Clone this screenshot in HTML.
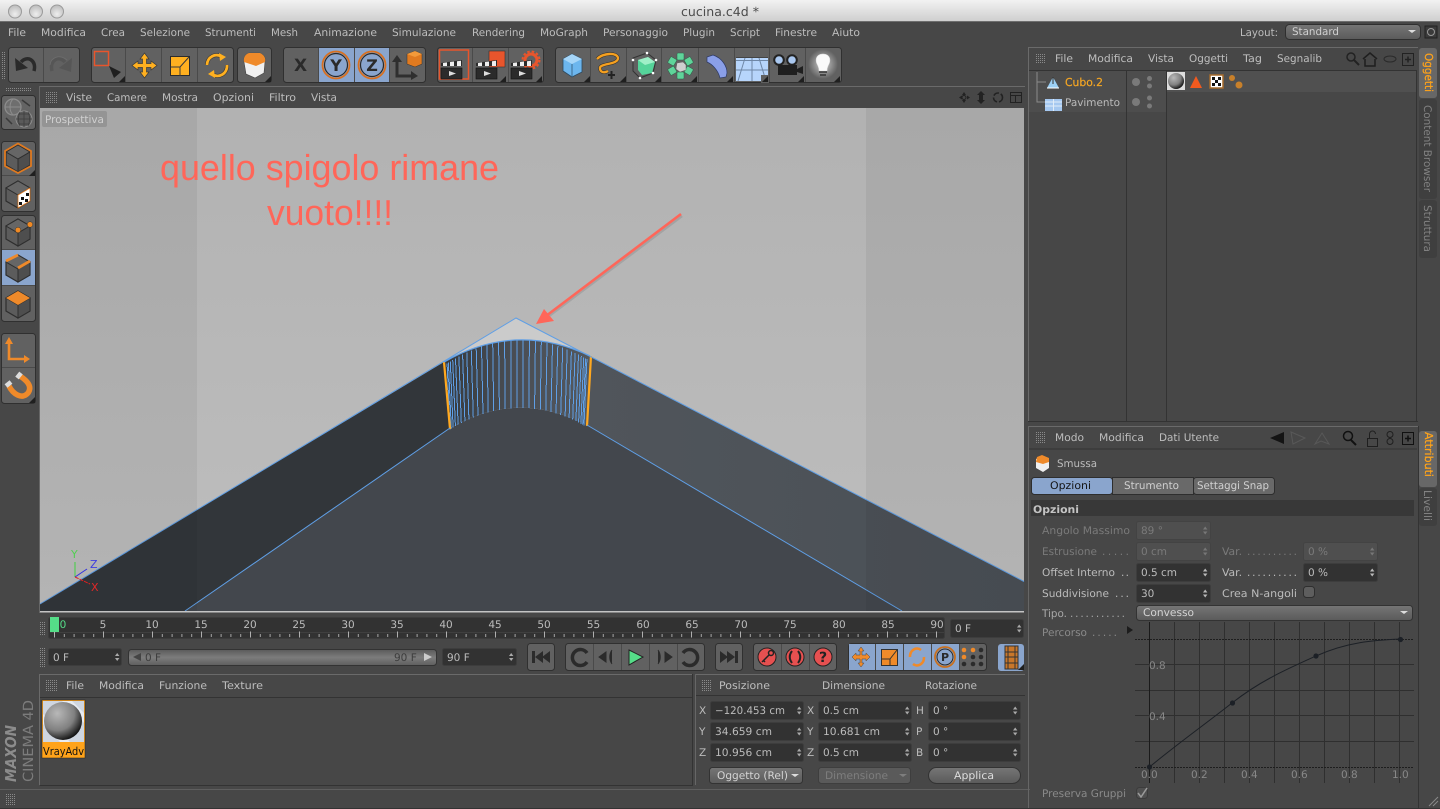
<!DOCTYPE html>
<html><head><meta charset="utf-8"><title>cucina.c4d</title>
<style>
html,body{margin:0;padding:0;background:#474747;overflow:hidden}
svg{display:block;text-rendering:geometricPrecision}
text{font-family:"DejaVu Sans","Liberation Sans",sans-serif;font-size:10.5px;fill:#bcbcbc}
.m{fill:#bebebe}.d{fill:#7a7a7a}
.p{fill:#616161;stroke:#303030;stroke-width:1}
.s{stroke:#4a4a4a;stroke-width:1}
.f{fill:#323232;stroke:#3d3d3d;stroke-width:1}
.fd{fill:#4f4f4f;stroke:#434343;stroke-width:1}
.b{fill:#8aa5cd}
</style></head><body>
<svg width="1440" height="809" viewBox="0 0 1440 809" xmlns="http://www.w3.org/2000/svg">
<defs>
<pattern id="g" width="2" height="2" patternUnits="userSpaceOnUse"><rect width="1" height="1" fill="#8a8a8a"/></pattern>
<linearGradient id="tb" x1="0" y1="0" x2="0" y2="1"><stop offset="0" stop-color="#f2f2f2"/><stop offset="1" stop-color="#cfcfcf"/></linearGradient>
<linearGradient id="cn" x1="0" y1="0" x2="0" y2="1"><stop offset="0" stop-color="#b2b2b2"/><stop offset="1" stop-color="#bebebe"/></linearGradient>
<linearGradient id="bev" x1="0" y1="0" x2="1" y2="0"><stop offset="0" stop-color="#363a3e"/><stop offset=".5" stop-color="#4a4e54"/><stop offset="1" stop-color="#53585e"/></linearGradient>
<linearGradient id="rf" x1="0" y1="0" x2="1" y2="0"><stop offset="0" stop-color="#50555b"/><stop offset="1" stop-color="#4a5056"/></linearGradient>
<linearGradient id="btn" x1="0" y1="0" x2="0" y2="1"><stop offset="0" stop-color="#767676"/><stop offset="1" stop-color="#5a5a5a"/></linearGradient>
<linearGradient id="sld" x1="0" y1="0" x2="0" y2="1"><stop offset="0" stop-color="#5a5a5a"/><stop offset=".5" stop-color="#7c7c7c"/><stop offset="1" stop-color="#5e5e5e"/></linearGradient>
<radialGradient id="sph" cx=".35" cy=".3" r=".75"><stop offset="0" stop-color="#b8b8b8"/><stop offset=".6" stop-color="#808080"/><stop offset="1" stop-color="#0c0c0c"/></radialGradient>
<radialGradient id="tl" cx=".5" cy=".7" r=".6"><stop offset="0" stop-color="#eee"/><stop offset="1" stop-color="#c2c2c2"/></radialGradient>
<radialGradient id="glow" cx=".5" cy=".5" r=".5"><stop offset="0" stop-color="#fff" stop-opacity=".7"/><stop offset="1" stop-color="#fff" stop-opacity="0"/></radialGradient>
<path id="sp" d="M0 3L2.2 0L4.4 3ZM0 5L2.2 8L4.4 5Z"/>
<path id="ct" d="M0 6H6V0Z" fill="#1f1f1f"/>
<g id="cube"><path d="M0-13L12-6V7L0 14L-12 7V-6Z" fill="#5c5c5c" stroke="#2e2e2e" stroke-width="1.200"/><path d="M0-13L12-6L0 1L-12-6Z" fill="#666" stroke="#2e2e2e" stroke-width="1"/><path d="M0 1V14L12 7V-6Z" fill="#4e4e4e" stroke="#2e2e2e" stroke-width="1"/></g>
<g id="clap"><rect x="0" y="10" width="21" height="11" fill="#2b2b2b" stroke="#111" stroke-width=".6"/><path d="M0 5L21 2V8H0Z" fill="#2b2b2b"/><path d="M2 5L6 4.400V8H2ZM9 4L13 3.500V8H9ZM16 3.200L20 2.700V8H16Z" fill="#eee"/><path d="M8 13L15 15.500L8 18Z" fill="#ddd"/></g>
</defs>

<!-- title bar -->
<rect width="1440" height="21" fill="url(#tb)"/><rect y="21" width="1440" height="1" fill="#6e6e6e"/>
<circle cx="15" cy="11.500" r="6.500" fill="url(#tl)" stroke="#9a9a9a"/><circle cx="36" cy="11.500" r="6.500" fill="url(#tl)" stroke="#9a9a9a"/><circle cx="57" cy="11.500" r="6.500" fill="url(#tl)" stroke="#9a9a9a"/>
<text x="681" y="16" style="font-size:12.500px;fill:#4c4c4c" textLength="78" lengthAdjust="spacingAndGlyphs">cucina.c4d *</text>

<!-- main menu -->
<text class="m" x="8" y="36" textLength="18" lengthAdjust="spacingAndGlyphs">File</text>
<text class="m" x="41" y="36" textLength="45" lengthAdjust="spacingAndGlyphs">Modifica</text>
<text class="m" x="101" y="36" textLength="24" lengthAdjust="spacingAndGlyphs">Crea</text>
<text class="m" x="140" y="36" textLength="50" lengthAdjust="spacingAndGlyphs">Selezione</text>
<text class="m" x="205" y="36" textLength="51" lengthAdjust="spacingAndGlyphs">Strumenti</text>
<text class="m" x="271" y="36" textLength="27" lengthAdjust="spacingAndGlyphs">Mesh</text>
<text class="m" x="314" y="36" textLength="63" lengthAdjust="spacingAndGlyphs">Animazione</text>
<text class="m" x="392" y="36" textLength="64" lengthAdjust="spacingAndGlyphs">Simulazione</text>
<text class="m" x="472" y="36" textLength="53" lengthAdjust="spacingAndGlyphs">Rendering</text>
<text class="m" x="540" y="36" textLength="48" lengthAdjust="spacingAndGlyphs">MoGraph</text>
<text class="m" x="603" y="36" textLength="65" lengthAdjust="spacingAndGlyphs">Personaggio</text>
<text class="m" x="683" y="36" textLength="32" lengthAdjust="spacingAndGlyphs">Plugin</text>
<text class="m" x="730" y="36" textLength="30" lengthAdjust="spacingAndGlyphs">Script</text>
<text class="m" x="775" y="36" textLength="42" lengthAdjust="spacingAndGlyphs">Finestre</text>
<text class="m" x="832" y="36" textLength="28" lengthAdjust="spacingAndGlyphs">Aiuto</text>
<text class="m" x="1240" y="36" textLength="38" lengthAdjust="spacingAndGlyphs">Layout:</text>
<rect x="1285.500" y="24.500" width="135" height="15" rx="4" fill="url(#btn)" stroke="#2f2f2f"/>
<text x="1292" y="35" style="fill:#d0d0d0" textLength="47" lengthAdjust="spacingAndGlyphs">Standard</text>
<path d="M1408 30H1416L1412 33Z" fill="#ddd"/>
<rect x="1425" y="26" width="12" height="12" fill="#3a3a3a" stroke="#222"/><circle cx="1431" cy="32" r="3.500" fill="none" stroke="#999"/>

<!-- top toolbar -->
<rect x="1" y="52" width="5" height="27" fill="url(#g)"/>
<rect class="p" x="8.500" y="47.500" width="71" height="35" rx="3"/><path class="s" d="M43.500 48V82"/>
<path d="M34 71C37 60 27 55 21 62" fill="none" stroke="#2a2a2a" stroke-width="3.500"/><path d="M15 58L16 71L28 68Z" fill="#2a2a2a"/>
<g opacity=".6"><path d="M52 71C49 60 59 55 65 62" fill="none" stroke="#4f4f4f" stroke-width="3.500"/><path d="M72 58L71 72L59 68Z" fill="#4f4f4f"/><path d="M50 65C51 57 60 54 67 60" fill="none" stroke="#777" stroke-width=".7"/></g>
<rect class="p" x="91.500" y="47.500" width="142" height="35" rx="3"/><path class="s" d="M125.500 48V82M161.500 48V82M197.500 48V82"/>
<rect x="94.500" y="51.500" width="14" height="14" fill="none" stroke="#e8552c" stroke-width="1.500"/>
<path d="M109 66L121 72L114 78Z" fill="#1f1f1f"/><use href="#ct" x="119" y="76"/>
<path d="M144.500 53L149 59H146.500V63.500H151V61L157 65.500L151 70V67.500H146.500V72H149L144.500 78L140 72H142.500V67.500H138V70L132 65.500L138 61V63.500H142.500V59H140Z" fill="#ffb020" stroke="#3a3a3a" stroke-width=".7"/>
<rect x="170.500" y="56.500" width="19" height="19" fill="#ffb020" stroke="#2c2c2c"/><path d="M171 67H180V76M180 67L189 57" fill="none" stroke="#3a3a3a"/>
<path d="M207 65A9.500 10 0 0 1 222 57" fill="none" stroke="#3a3a3a" stroke-width="4"/><path d="M227 65A9.500 10 0 0 1 212 74" fill="none" stroke="#3a3a3a" stroke-width="4"/>
<path d="M207 65A9.500 10 0 0 1 222 57" fill="none" stroke="#ffb020" stroke-width="2.800"/><path d="M227 65A9.500 10 0 0 1 212 74" fill="none" stroke="#ffb020" stroke-width="2.800"/><path d="M219 53L226 57L220 61ZM215 78L208 74L214 70Z" fill="#ffb020"/>
<rect class="p" x="237.500" y="47.500" width="34" height="35" rx="3"/>
<path d="M244 62C243 57 246 54 249 53L260 53C264 55 266 58 265 62L264 73L255 78L246 74Z" fill="#f0f0f0" stroke="#444" stroke-width=".6"/><path d="M244 62C243 57 246 54 249 53L260 53C264 55 266 58 265 62L256 66Z" fill="#ef8a2a"/><use href="#ct" x="265" y="76"/>
<rect class="p" x="283.500" y="47.500" width="142" height="35" rx="3"/>
<rect class="b" x="318" y="48" width="71" height="34"/><path class="s" d="M318.500 48V82M354.500 48V82M389.500 48V82"/>
<text x="300.500" y="71" text-anchor="middle" style="font-size:17px;font-weight:bold;fill:#2a2a2a">X</text>
<circle cx="336" cy="65" r="13.500" fill="none" stroke="#d9701f" stroke-width="1.800"/><circle cx="336" cy="65" r="11.500" fill="none" stroke="#2a2a2a" stroke-width="1.200"/>
<text x="336" y="71" text-anchor="middle" style="font-size:16px;font-weight:bold;fill:#2a2a2a">Y</text>
<circle cx="372" cy="65" r="13.500" fill="none" stroke="#d9701f" stroke-width="1.800"/><circle cx="372" cy="65" r="11.500" fill="none" stroke="#2a2a2a" stroke-width="1.200"/>
<text x="372" y="71" text-anchor="middle" style="font-size:16px;font-weight:bold;fill:#2a2a2a">Z</text>
<path d="M397 60V76H413" fill="none" stroke="#2f2f2f" stroke-width="3"/><path d="M392 62L397 55L402 62ZM411 71L418 76L411 80Z" fill="#2f2f2f"/>
<path d="M415 51L422 54V64L415 67L407 64V54Z" fill="#e07a20" stroke="#333" stroke-width=".5"/><path d="M407 54L415 57L422 54L415 51Z" fill="#f39a3a"/>
<rect class="p" x="437.500" y="47.500" width="106" height="35" rx="3"/><path class="s" d="M472.500 48V82M508.500 48V82"/>
<rect x="439.500" y="50" width="29" height="29" fill="none" stroke="#e8552c" stroke-width="1.500"/>
<use href="#clap" x="441" y="58"/>
<rect x="489" y="51" width="16" height="16" fill="#e8552c" stroke="#333" stroke-width=".6"/><use href="#clap" x="476" y="58"/><use href="#ct" x="500" y="76"/>
<circle cx="531" cy="60" r="6" fill="none" stroke="#e8552c" stroke-width="3"/><circle cx="531" cy="60" r="8.500" fill="none" stroke="#e8552c" stroke-width="2" stroke-dasharray="2.500 2"/><use href="#clap" x="511" y="58"/><use href="#ct" x="536" y="76"/>
<rect class="p" x="555.500" y="47.500" width="286" height="35" rx="3"/><path class="s" d="M590.500 48V82M626.500 48V82M661.500 48V82M698.500 48V82M734.500 48V82M769.500 48V82M805.500 48V82"/>
<path d="M572 54L582 59V72L572 77L563 71V59Z" fill="#6cb6ee" stroke="#2e4a60" stroke-width=".8"/><path d="M563 59L572 64L582 59L572 54Z" fill="#a5d5f8"/><path d="M572 64V77" stroke="#3e6a8c"/><use href="#ct" x="584" y="76"/>
<path d="M597 59C603 53 617 52 618 58C618 65 600 63 600 68C600 73 605 73 608 71" fill="none" stroke="#2a2a2a" stroke-width="3.400"/><path d="M597 59C603 53 617 52 618 58C618 65 600 63 600 68C600 73 605 73 608 71" fill="none" stroke="#f5a020" stroke-width="2.400"/><path d="M608 75H615M611.500 71V79" stroke="#222" stroke-width="2"/><use href="#ct" x="620" y="76"/>
<path d="M633 58L647 53L656 60L653 73L640 78L633 71Z" fill="none" stroke="#333"/><path d="M638 60L648 57L655 62L652 73L642 75L638 70Z" fill="#55d49a"/><path d="M638 60L648 57L655 62L645 65Z" fill="#9ff0c8"/><circle cx="633" cy="60" r="1.300" fill="#fff"/><circle cx="647" cy="53" r="1.300" fill="#fff"/><circle cx="656" cy="60" r="1.300" fill="#fff"/><circle cx="653" cy="73" r="1.300" fill="#fff"/><circle cx="640" cy="78" r="1.300" fill="#fff"/><use href="#ct" x="655" y="76"/>
<g fill="#5fd49a" stroke="#2d5f46" stroke-width=".5"><rect x="-3.500" y="-13" width="7" height="7" rx="1" transform="translate(680.500,66)"/><rect x="-3.500" y="-13" width="7" height="7" rx="1" transform="translate(680.500,66) rotate(60)"/><rect x="-3.500" y="-13" width="7" height="7" rx="1" transform="translate(680.500,66) rotate(120)"/><rect x="-3.500" y="-13" width="7" height="7" rx="1" transform="translate(680.500,66) rotate(180)"/><rect x="-3.500" y="-13" width="7" height="7" rx="1" transform="translate(680.500,66) rotate(240)"/><rect x="-3.500" y="-13" width="7" height="7" rx="1" transform="translate(680.500,66) rotate(300)"/></g><path d="M677 63L683 62L686 65V70L680 72L676 69Z" fill="#cfcfcf" stroke="#666" stroke-width=".5"/><use href="#ct" x="691" y="76"/>
<path d="M707 57L713 55C722 58 727 66 727 73L726 77L720 78C718 70 712 64 707 62Z" fill="#8a9fe8" stroke="#2e3a66" stroke-width=".7"/><use href="#ct" x="727" y="76"/>
<rect x="736" y="57" width="32" height="24" fill="#b7d5fb"/><path d="M736 57.500H768" stroke="#444"/><path d="M736 60.500H768M752 58V81M745 58L738 81M759 58L766 81M736 70H768" stroke="#6f87a6" stroke-width="1" fill="none"/><rect x="761" y="75" width="8" height="8" fill="#5f5f5f"/><use href="#ct" x="762" y="76"/>
<circle cx="779" cy="60" r="4.800" fill="#aac8f0" stroke="#222" stroke-width="2"/><circle cx="792" cy="60" r="4.800" fill="#aac8f0" stroke="#222" stroke-width="2"/><rect x="778" y="65" width="19" height="10" fill="#1f1f1f"/><path d="M797 69L803 66V74L797 72Z" fill="#1f1f1f"/><use href="#ct" x="798" y="76"/>
<circle cx="823" cy="64" r="15" fill="url(#glow)"/><path d="M823 54C830 54 831 60 829 64C828 66 827 68 827 71H819C819 68 818 66 817 64C815 60 816 54 823 54Z" fill="#fafafa" stroke="#ddd" stroke-width=".5"/><path d="M819 72H827M820 75H826" stroke="#333" stroke-width="1.500"/><use href="#ct" x="834" y="76"/>

<!-- left tool column -->
<rect x="6" y="87" width="26" height="5" fill="url(#g)"/>
<rect x="1.500" y="95.500" width="34" height="34" rx="3" fill="#646464" stroke="#2e2e2e"/>
<circle cx="13" cy="107" r="8" fill="#6e6e6e" stroke="#8c8c8c" stroke-width="1.300"/><path d="M5 107H21M13 99C9 103 9 111 13 115" stroke="#8c8c8c" fill="none"/>
<circle cx="24" cy="119" r="8" fill="#5a5a5a" stroke="#8c8c8c" stroke-width="1"/><path d="M16 119H32M24 111V127M18 114H30M18 124H30M20 112C18 116 18 122 20 126M28 112C30 116 30 122 28 126" stroke="#3e3e3e" stroke-width=".8" fill="none"/><path d="M22 100L30 106M6 118L12 124" stroke="#3a3a3a" stroke-width="1.500"/>
<rect class="p" x="1.500" y="141.500" width="34" height="70" rx="3"/><path class="s" d="M2 175.500H35"/>
<rect class="p" x="1.500" y="215.500" width="34" height="106" rx="3"/><rect class="b" x="2" y="250" width="33" height="35"/><path class="s" d="M2 249.500H35M2 285.500H35"/>
<rect class="p" x="1.500" y="333.500" width="34" height="70" rx="3"/><path class="s" d="M2 367.500H35"/>
<use href="#cube" x="18" y="158"/><path d="M18 143.500L31 151V166L18 173L5 166V151Z" fill="none" stroke="#e07a20" stroke-width="1.800"/><use href="#ct" x="29" y="170"/>
<use href="#cube" x="18" y="194"/><path d="M18 195V208L30 201V188Z" fill="#fff" stroke="#e07a20" stroke-width=".8"/><path d="M21 197h3v3h-3zM26 193h3v3h-3zM19 202h3v3h-3zM25 199h3v3h-3z" fill="#111"/>
<use href="#cube" x="18" y="232"/><circle cx="18" cy="230" r="2.800" fill="#f08a24" stroke="#333" stroke-width=".5"/><circle cx="30" cy="224.500" r="2.800" fill="#f08a24" stroke="#333" stroke-width=".5"/>
<use href="#cube" x="18" y="268"/><path d="M6 261L18 255M18 268L30 261" stroke="#ef8a2a" stroke-width="2.800"/>
<use href="#cube" x="18" y="304"/><path d="M18 291L30 298L18 305L6 298Z" fill="#ef8a2a"/>
<path d="M9 340V359H27" fill="none" stroke="#ef8a2a" stroke-width="2.600"/><path d="M5 344L9 337L13 344ZM24 355L30 359L24 363Z" fill="#ef8a2a"/>
<path d="M9 386C13 394 22 400 28 393C33 386 26 380 20 376" fill="none" stroke="#ef8a2a" stroke-width="5.500"/><path d="M6 386L11 382M17 378L21 373" stroke="#ddd" stroke-width="4.500"/><use href="#ct" x="29" y="397"/>

<!-- viewport frame -->
<rect x="39" y="86" width="986" height="1" fill="#6a6a6a"/><rect x="39" y="86" width="1" height="527" fill="#666"/>
<rect x="46" y="92" width="11" height="11" fill="url(#g)"/>
<text class="m" x="66" y="101" textLength="26" lengthAdjust="spacingAndGlyphs">Viste</text>
<text class="m" x="107" y="101" textLength="40" lengthAdjust="spacingAndGlyphs">Camere</text>
<text class="m" x="162" y="101" textLength="36" lengthAdjust="spacingAndGlyphs">Mostra</text>
<text class="m" x="213" y="101" textLength="41" lengthAdjust="spacingAndGlyphs">Opzioni</text>
<text class="m" x="269" y="101" textLength="27" lengthAdjust="spacingAndGlyphs">Filtro</text>
<text class="m" x="311" y="101" textLength="26" lengthAdjust="spacingAndGlyphs">Vista</text>
<path d="M964 92L966 95H962ZM964 103L966 100H962ZM959 97.500L962 95.500V99.500ZM970 97.500L967 95.500V99.500Z" fill="#222"/><circle cx="964" cy="97.500" r="2" fill="none" stroke="#222"/>
<path d="M981 91L985 95H983V100H985L981 104L977 100H979V95H977Z" fill="#222"/>
<circle cx="998" cy="97.500" r="4.500" fill="none" stroke="#222" stroke-width="1.600" stroke-dasharray="6 2"/>
<rect x="1010.500" y="92.500" width="11" height="10" fill="none" stroke="#222"/><path d="M1011 95.500H1021M1015.500 96V102" stroke="#222"/>

<!-- viewport -->
<rect x="40" y="108" width="984" height="504" fill="url(#cn)"/>
<path d="M516 318L444 362Q516 321 590 356Z" fill="#cbcbcb"/>
<path d="M40 604L444 362L450 428L185 611H40Z" fill="#32363a"/>
<path d="M590 356L1024 581.500V611H902L587 425Z" fill="url(#rf)"/>
<path d="M185 611L450 428Q517 389 587 425L902 611Z" fill="#43474d"/>
<path d="M444 362Q516 321 590 356L587 425Q517 389 450 428Z" fill="url(#bev)"/>
<g transform="matrix(1,-0.03,0,1,0,15.500)" stroke="#5f9fe6" stroke-width="1" fill="none" shape-rendering="crispEdges">
<path d="M517 340V408M523.200 340.200L522.900 408.200M510.800 340.200L511.100 408.200M529.400 340.700L528.800 408.600M504.600 340.700L505.200 408.600M535.400 341.500L534.600 409.300M498.600 341.500L499.400 409.300M541.300 342.600L540.300 410.300M492.700 342.600L493.700 410.300M547 343.900L545.800 411.600M487 343.900L488.200 411.600M552.500 345.500L551 413M481.500 345.500L483 413M557.800 347.200L556 414.600M476.200 347.200L478 414.600M562.700 349.100L560.700 416.300M471.300 349.100L473.300 416.300M567.200 351L565.100 418M466.800 351L468.900 418M571.400 352.900L569.100 419.700M462.600 352.900L464.900 419.700M575.100 354.800L572.700 421.400M458.900 354.800L461.300 421.400M578.500 356.500L575.900 423M455.500 356.500L458.100 423M581.300 358.100L578.600 424.400M452.700 358.100L455.400 424.400M583.700 359.400L580.900 425.700M450.300 359.400L453.100 425.700M585.600 360.500L582.700 426.700M448.400 360.500L451.300 426.700M586.900 361.300L584 427.400M447.100 361.300L450 427.400"/>
</g>
<path d="M444 362L450 429M591 356L587 426" stroke="#ffa81f" stroke-width="2.200" fill="none"/>
<path d="M444 362Q516 321 590 356" stroke="#5f9fe6" stroke-width="1.300" fill="none"/>
<path d="M40 604L516 318L1024 581.500M185 611L450 428M587 425L902 611" stroke="#5f9fe6" stroke-width="1" fill="none"/>
<rect x="40" y="108" width="157" height="504" fill="#000" opacity=".05"/><rect x="866" y="108" width="158" height="504" fill="#000" opacity=".05"/>
<rect x="42" y="111" width="65" height="16" rx="2" fill="#8f8f8f" opacity=".8"/>
<text x="45" y="123" style="fill:#d0d0d0" textLength="59" lengthAdjust="spacingAndGlyphs">Prospettiva</text>
<text x="160" y="180" style='font-family:"Liberation Sans",sans-serif;font-size:36px;fill:#ff6659' textLength="339" lengthAdjust="spacingAndGlyphs">quello spigolo rimane</text>
<text x="267" y="225" style='font-family:"Liberation Sans",sans-serif;font-size:36px;fill:#ff6659' textLength="126" lengthAdjust="spacingAndGlyphs">vuoto!!!!</text>
<path d="M681 214L548 314" stroke="#5f5f5f" stroke-width="2.600" opacity=".2" transform="translate(1,2)"/>
<path d="M681 214L546 316" stroke="#ff6659" stroke-width="2.600"/><path d="M536 324L544 309L554 321Z" fill="#ff6659"/>
<path d="M75 577V562" stroke="#40d040"/><path d="M75 577L87 569" stroke="#3030e0"/><path d="M75 577L90 584" stroke="#e02020" stroke-dasharray="4 1"/>
<text x="71" y="558" style="font-size:11px;fill:#50d050">Y</text><text x="90" y="568" style="font-size:11px;fill:#4040e0">Z</text><text x="91" y="591" style="font-size:11px;fill:#e02828">X</text>
<rect x="40" y="611" width="984" height="1.500" fill="#c4c4c4"/>

<!-- timeline -->
<rect x="40" y="622" width="5" height="14" fill="url(#g)"/>
<rect x="48.500" y="617.500" width="896" height="21" rx="2" fill="#323232" stroke="#3c3c3c"/>
<path d="M50 632.500H944" stroke="#3f3f3f"/>
<line x1="54" x2="940" y1="635.500" y2="635.500" stroke="#a6a6a6" stroke-width="3" stroke-dasharray="1 8.800"/>
<line x1="54" x2="940" y1="634.500" y2="634.500" stroke="#b0b0b0" stroke-width="6" stroke-dasharray="1 48"/>
<rect x="50" y="617" width="9" height="15" fill="#55dd88"/>
<g text-anchor="middle">
<text x="63" y="628" style="fill:#55dd88">0</text><text x="103" y="628">5</text><text x="152" y="628">10</text><text x="201" y="628">15</text><text x="250" y="628">20</text><text x="299" y="628">25</text><text x="348" y="628">30</text><text x="397" y="628">35</text><text x="446" y="628">40</text><text x="495" y="628">45</text><text x="544" y="628">50</text><text x="593.500" y="628">55</text><text x="643" y="628">60</text><text x="692" y="628">65</text><text x="741" y="628">70</text><text x="790" y="628">75</text><text x="839" y="628">80</text><text x="888" y="628">85</text><text x="937" y="628">90</text>
</g>
<rect class="f" x="950.500" y="619.500" width="73" height="18" rx="2"/><text x="955" y="632">0 F</text><use href="#sp" x="1017" y="624.500" fill="#aaa"/>

<!-- transport row -->
<rect x="40" y="648" width="5" height="19" fill="url(#g)"/>
<rect class="f" x="48.500" y="648.500" width="73" height="17" rx="2"/><text x="53" y="661">0 F</text><use href="#sp" x="115" y="653" fill="#aaa"/>
<rect x="128.500" y="649.500" width="308" height="16" rx="3" fill="url(#sld)" stroke="#333"/>
<path d="M133 657L141 653V661Z" fill="#444"/><text x="145" y="661" style="fill:#3d3d3d">0 F</text><text x="394" y="661" style="fill:#3d3d3d">90 F</text><path d="M432 657L424 653V661Z" fill="#ccc"/>
<rect class="f" x="442.500" y="648.500" width="74" height="17" rx="2"/><text x="447" y="661">90 F</text><use href="#sp" x="509" y="653" fill="#aaa"/>
<rect class="p" x="527.500" y="643.500" width="27" height="27" rx="3"/>
<path d="M532 651V663H535V651ZM535 657L543 651V663ZM542 657L550 651V663Z" fill="#2b2b2b"/>
<rect class="p" x="565.500" y="643.500" width="139" height="27" rx="3"/><path class="s" d="M593.500 644V670M621.500 644V670M649.500 644V670M677.500 644V670"/>
<path d="M587 653A8 8 0 1 0 587 662" fill="none" stroke="#2b2b2b" stroke-width="3.500"/>
<path d="M599 657L606 652V662ZM612 650C609 654 609 660 612 664" fill="#2b2b2b" stroke="#2b2b2b"/>
<path d="M629 650L643 657L629 665Z" fill="#55dd88" stroke="#222"/>
<path d="M672 657L665 652V662ZM658 650C661 654 661 660 658 664" fill="#2b2b2b" stroke="#2b2b2b"/>
<path d="M683 653A8 8 0 1 1 683 662" fill="none" stroke="#2b2b2b" stroke-width="3.500"/>
<rect class="p" x="715.500" y="643.500" width="27" height="27" rx="3"/>
<path d="M738 651V663H735V651ZM735 657L727 651V663ZM728 657L720 651V663Z" fill="#2b2b2b"/>
<rect class="p" x="753.500" y="643.500" width="83" height="27" rx="3"/><path class="s" d="M781.500 644V670M809.500 644V670"/>
<circle cx="767" cy="657" r="9" fill="#e65050" stroke="#222"/><circle cx="771" cy="653" r="2.500" fill="none" stroke="#222" stroke-width="1.500"/><path d="M769 655L762 662M763 660L765 662" stroke="#222" stroke-width="1.500"/>
<circle cx="795" cy="657" r="9" fill="#e65050" stroke="#222"/><path d="M792 651C789 655 789 659 792 663M798 651C801 655 801 659 798 663" fill="none" stroke="#222" stroke-width="2"/>
<circle cx="823" cy="657" r="9" fill="#e65050" stroke="#222"/><text x="823" y="662" text-anchor="middle" style="font-size:14px;font-weight:bold;fill:#222">?</text>
<rect class="p" x="848.500" y="643.500" width="138" height="27" rx="3"/><rect class="b" x="849" y="644" width="110" height="26"/><path class="s" d="M875.500 644V670M903.500 644V670M931.500 644V670M959.500 644V670"/>
<path d="M861 647L864 651H862V655H866V653L870 657L866 661V659H862V663H864L861 667L858 663H860V659H856V661L852 657L856 653V655H860V651H858Z" fill="#ef8a2a" stroke="#444" stroke-width=".5"/>
<rect x="881.500" y="649.500" width="16" height="16" fill="#ef8a2a" stroke="#333"/><path d="M882 659H890V666M890 659L897 650" fill="none" stroke="#333"/>
<path d="M910 657A7 8 0 0 1 921 650" fill="none" stroke="#ef8a2a" stroke-width="2.600"/><path d="M924 657A7 8 0 0 1 913 664" fill="none" stroke="#ef8a2a" stroke-width="2.600"/>
<circle cx="945" cy="657" r="10" fill="none" stroke="#c8701f" stroke-width="1.800"/><circle cx="945" cy="657" r="8" fill="none" stroke="#2a2a2a"/><text x="945" y="661" text-anchor="middle" style="font-size:11px;font-weight:bold;fill:#2a2a2a">P</text>
<g fill="#2b2b2b"><circle cx="964" cy="650" r="2.300" fill="#ef8a2a"/><circle cx="973" cy="650" r="2.300" fill="#ef8a2a"/><circle cx="981" cy="650" r="2.300"/><circle cx="964" cy="657" r="2.300" fill="#ef8a2a"/><circle cx="973" cy="657" r="2.300"/><circle cx="981" cy="657" r="2.300"/><circle cx="964" cy="664" r="2.300"/><circle cx="973" cy="664" r="2.300"/><circle cx="981" cy="664" r="2.300"/></g>
<rect class="b" x="998" y="644" width="26" height="27" rx="3"/>
<rect x="1005" y="646" width="13" height="23" fill="#c9772a" stroke="#333"/><path d="M1005 652H1018M1005 657H1018M1005 663H1018M1008 646V669M1015 646V669" stroke="#333"/><use href="#ct" x="1018" y="664"/>

<!-- material panel -->
<rect x="39" y="674" width="653" height="1" fill="#6a6a6a"/><rect x="39" y="674" width="1" height="111" fill="#6a6a6a"/><rect x="692" y="674" width="1" height="111" fill="#333"/>
<rect x="46" y="680" width="11" height="11" fill="url(#g)"/>
<text class="m" x="66" y="689" textLength="18" lengthAdjust="spacingAndGlyphs">File</text>
<text class="m" x="99" y="689" textLength="45" lengthAdjust="spacingAndGlyphs">Modifica</text>
<text class="m" x="159" y="689" textLength="48" lengthAdjust="spacingAndGlyphs">Funzione</text>
<text class="m" x="222" y="689" textLength="41" lengthAdjust="spacingAndGlyphs">Texture</text>
<rect x="40" y="697" width="653" height="1" fill="#333"/>
<rect x="40" y="785" width="653" height="1" fill="#333"/><rect x="0" y="789" width="1030" height="1" fill="#5f5f5f"/>
<rect x="42" y="700" width="43" height="58" fill="#ffa31a" stroke="#222" stroke-width=".5"/><rect x="43" y="701" width="41" height="41" fill="#cfd6e0"/><path d="M43 724L60 742H70L43 714ZM62 701L84 723V713L72 701Z" fill="#e8ecf2"/><circle cx="63" cy="721" r="19" fill="url(#sph)"/>
<text x="43" y="755" style="fill:#111;font-size:11px" textLength="41" lengthAdjust="spacingAndGlyphs">VrayAdv</text>
<text transform="translate(16,782) rotate(-90)" style="font-size:15px;font-weight:bold;font-style:italic;fill:#8c8c8c" textLength="57" lengthAdjust="spacingAndGlyphs">MAXON</text>
<text transform="translate(33,782) rotate(-90)" style="font-size:14px;fill:#7c7c7c" textLength="82" lengthAdjust="spacingAndGlyphs">CINEMA 4D</text>
<rect x="5" y="794" width="11" height="11" fill="url(#g)"/>
<rect x="0" y="808" width="1440" height="1" fill="#333"/>

<!-- coordinates panel -->
<rect x="695" y="674" width="330" height="1" fill="#6a6a6a"/><rect x="695" y="674" width="1" height="111" fill="#666"/><rect x="696" y="695" width="329" height="1" fill="#333"/>
<rect x="701" y="680" width="11" height="11" fill="url(#g)"/>
<text class="m" x="719" y="689" textLength="51" lengthAdjust="spacingAndGlyphs">Posizione</text>
<text class="m" x="822" y="689" textLength="63" lengthAdjust="spacingAndGlyphs">Dimensione</text>
<text class="m" x="925" y="689" textLength="52" lengthAdjust="spacingAndGlyphs">Rotazione</text>
<text x="699" y="714">X</text><text x="699" y="735">Y</text><text x="699" y="756">Z</text>
<text x="807" y="714">X</text><text x="807" y="735">Y</text><text x="807" y="756">Z</text>
<text x="916" y="714">H</text><text x="916" y="735">P</text><text x="916" y="756">B</text>
<rect class="f" x="710.500" y="701.500" width="93" height="18" rx="2"/><rect class="f" x="818.500" y="701.500" width="93" height="18" rx="2"/><rect class="f" x="928.500" y="701.500" width="92" height="18" rx="2"/>
<rect class="f" x="710.500" y="722.500" width="93" height="18" rx="2"/><rect class="f" x="818.500" y="722.500" width="93" height="18" rx="2"/><rect class="f" x="928.500" y="722.500" width="92" height="18" rx="2"/>
<rect class="f" x="710.500" y="743.500" width="93" height="18" rx="2"/><rect class="f" x="818.500" y="743.500" width="93" height="18" rx="2"/><rect class="f" x="928.500" y="743.500" width="92" height="18" rx="2"/>
<text x="715" y="714" textLength="70" lengthAdjust="spacingAndGlyphs">−120.453 cm</text><text x="823" y="714">0.5 cm</text><text x="933" y="714">0 °</text>
<text x="715" y="735" textLength="57" lengthAdjust="spacingAndGlyphs">34.659 cm</text><text x="823" y="735" textLength="57" lengthAdjust="spacingAndGlyphs">10.681 cm</text><text x="933" y="735">0 °</text>
<text x="715" y="756" textLength="57" lengthAdjust="spacingAndGlyphs">10.956 cm</text><text x="823" y="756">0.5 cm</text><text x="933" y="756">0 °</text>
<g fill="#aaa"><use href="#sp" x="797" y="706.500"/><use href="#sp" x="905" y="706.500"/><use href="#sp" x="1013" y="706.500"/><use href="#sp" x="797" y="727.500"/><use href="#sp" x="905" y="727.500"/><use href="#sp" x="1013" y="727.500"/><use href="#sp" x="797" y="748.500"/><use href="#sp" x="905" y="748.500"/><use href="#sp" x="1013" y="748.500"/></g>
<rect x="709.500" y="767.500" width="93" height="16" rx="3" fill="url(#btn)" stroke="#333"/><text x="717" y="779" style="fill:#d4d4d4" textLength="71" lengthAdjust="spacingAndGlyphs">Oggetto (Rel)</text><path d="M791 774H799L795 777Z" fill="#ddd"/>
<rect x="818.500" y="767.500" width="92" height="16" rx="3" fill="#5a5a5a" stroke="#3e3e3e"/><text x="825" y="779" style="fill:#7e7e7e" textLength="63" lengthAdjust="spacingAndGlyphs">Dimensione</text><path d="M899 774H907L903 777Z" fill="#7e7e7e"/>
<rect x="928.500" y="767.500" width="92" height="16" rx="8" fill="url(#btn)" stroke="#333"/><text x="954" y="779" style="fill:#dedede" textLength="40" lengthAdjust="spacingAndGlyphs">Applica</text>

<!-- objects panel -->
<rect x="1028" y="47" width="390" height="1" fill="#6a6a6a"/><rect x="1028" y="47" width="1" height="375" fill="#6a6a6a"/><rect x="1028" y="421" width="390" height="1" fill="#333"/>
<rect x="1035" y="53" width="11" height="11" fill="url(#g)"/>
<text class="m" x="1055" y="62" textLength="18" lengthAdjust="spacingAndGlyphs">File</text>
<text class="m" x="1088" y="62" textLength="45" lengthAdjust="spacingAndGlyphs">Modifica</text>
<text class="m" x="1148" y="62" textLength="26" lengthAdjust="spacingAndGlyphs">Vista</text>
<text class="m" x="1189" y="62" textLength="39" lengthAdjust="spacingAndGlyphs">Oggetti</text>
<text class="m" x="1243" y="62" textLength="19" lengthAdjust="spacingAndGlyphs">Tag</text>
<text class="m" x="1277" y="62" textLength="45" lengthAdjust="spacingAndGlyphs">Segnalib</text>
<circle cx="1351" cy="57" r="4" fill="none" stroke="#222" stroke-width="1.500"/><path d="M1354 60L1359 65" stroke="#222" stroke-width="2"/>
<path d="M1363 59L1370 53L1377 59M1365 59V66H1375V59" fill="none" stroke="#1f1f1f" stroke-width="1.500"/>
<ellipse cx="1390" cy="59" rx="6" ry="3" fill="none" stroke="#2a2a2a"/>
<rect x="1402.500" y="53.500" width="11" height="12" fill="none" stroke="#222"/><path d="M1405 59.500H1411M1408 56.500V62.500" stroke="#222" stroke-width="1.500"/>
<rect x="1029" y="70" width="388" height="1" fill="#333"/>
<rect x="1029" y="71" width="97" height="41" fill="#4d4d4d"/><rect x="1127" y="71" width="39" height="41" fill="#4d4d4d"/><rect x="1167" y="71" width="249" height="21" fill="#505050"/>
<path d="M1126.500 71V421M1166.500 71V421M1416.500 71V421" stroke="#333"/>
<path d="M1037 72V102H1045M1037 82H1046" stroke="#8a8a8a" fill="none"/>
<path d="M1053 77L1059 88H1047Z" fill="#9cd0f5"/><path d="M1053 77L1053 84" stroke="#333"/><path d="M1047 88H1059" stroke="#fff"/>
<text x="1065" y="86" style="fill:#f5a623;font-size:11px;stroke:#f5a623;stroke-width:.2" textLength="38" lengthAdjust="spacingAndGlyphs">Cubo.2</text>
<rect x="1045" y="99" width="17" height="12" fill="#a5c8f0"/><path d="M1045 102H1062M1053.500 99V111M1045 106H1062" stroke="#e0ecf8"/>
<text x="1065" y="106" textLength="55" lengthAdjust="spacingAndGlyphs">Pavimento</text>
<g fill="#7a7a7a"><circle cx="1136" cy="82" r="4"/><circle cx="1149.500" cy="78.500" r="2.500"/><circle cx="1149.500" cy="86" r="2.500"/><circle cx="1136" cy="102" r="4"/><circle cx="1149.500" cy="98" r="2.500"/><circle cx="1149.500" cy="106" r="2.500"/></g>
<rect x="1167" y="72" width="18" height="18" fill="#ddd"/><circle cx="1176" cy="81" r="8" fill="url(#sph)"/>
<path d="M1196 76L1202 88H1190Z" fill="#f25a1f"/>
<rect x="1210" y="75" width="13" height="13" fill="#fff" stroke="#a66a2a" stroke-width="1.500"/><path d="M1212 77h3v3h-3zM1218 77h3v3h-3zM1215 80h3v3h-3zM1212 83h3v3h-3zM1218 83h3v3h-3z" fill="#111"/>
<circle cx="1232" cy="78" r="3" fill="#c8802a"/><circle cx="1239" cy="85" r="3.500" fill="#c8802a"/>

<!-- right tabs -->
<rect x="1419" y="48" width="18" height="50" rx="3" fill="#676767"/><rect x="1419" y="99" width="18" height="100" rx="3" fill="#3f3f3f"/><rect x="1419" y="200" width="18" height="58" rx="3" fill="#3f3f3f"/>
<text transform="translate(1425,53) rotate(90)" style="fill:#ffa31a;font-size:11px;stroke:#ffa31a;stroke-width:.25" textLength="39" lengthAdjust="spacingAndGlyphs">Oggetti</text>
<text transform="translate(1424,105) rotate(90)" style="fill:#838383" textLength="87" lengthAdjust="spacingAndGlyphs">Content Browser</text>
<text transform="translate(1424,205) rotate(90)" style="fill:#838383" textLength="47" lengthAdjust="spacingAndGlyphs">Struttura</text>
<rect x="1419" y="431" width="18" height="56" rx="3" fill="#676767"/><rect x="1419" y="488" width="18" height="38" rx="3" fill="#3f3f3f"/>
<text transform="translate(1425,432) rotate(90)" style="fill:#ffa31a;font-size:11px;stroke:#ffa31a;stroke-width:.25" textLength="45" lengthAdjust="spacingAndGlyphs">Attributi</text>
<text transform="translate(1424,490) rotate(90)" style="fill:#838383" textLength="31" lengthAdjust="spacingAndGlyphs">Livelli</text>

<!-- attributes panel -->
<rect x="1028" y="426" width="390" height="1" fill="#6a6a6a"/><rect x="1028" y="426" width="1" height="382" fill="#666"/><rect x="1418" y="426" width="1" height="382" fill="#333"/>
<rect x="1035" y="432" width="11" height="11" fill="url(#g)"/>
<text class="m" x="1055" y="441" textLength="29" lengthAdjust="spacingAndGlyphs">Modo</text>
<text class="m" x="1099" y="441" textLength="45" lengthAdjust="spacingAndGlyphs">Modifica</text>
<text class="m" x="1159" y="441" textLength="60" lengthAdjust="spacingAndGlyphs">Dati Utente</text>
<path d="M1270 438L1284 432V444Z" fill="#141414"/><path d="M1305 438L1291 432L1293 444Z" fill="none" stroke="#585858"/><path d="M1322 433L1329 444L1321 441L1315 444Z" fill="none" stroke="#585858"/>
<circle cx="1348" cy="436" r="4.500" fill="none" stroke="#111" stroke-width="1.500"/><path d="M1351 440L1356 445" stroke="#111" stroke-width="2"/>
<rect x="1367.500" y="438.500" width="10" height="8" fill="none" stroke="#1f1f1f"/><path d="M1369.500 438V434A3 3 0 0 1 1375.500 434" fill="none" stroke="#1f1f1f"/>
<circle cx="1390" cy="434.500" r="3" fill="none" stroke="#1f1f1f"/><circle cx="1390" cy="441.500" r="3" fill="none" stroke="#1f1f1f"/>
<rect x="1402.500" y="432.500" width="11" height="12" fill="none" stroke="#111"/><path d="M1405 438.500H1411M1408 435.500V441.500" stroke="#111" stroke-width="1.500"/>
<rect x="1029" y="448.500" width="388" height="1" fill="#333"/>
<path d="M1036 459L1042 456L1049 459L1049 468L1043 472L1036 468Z" fill="#f0f0f0"/><path d="M1036 462L1037 457L1042 455L1049 458L1049 462L1043 464Z" fill="#ef8a2a"/>
<text x="1057" y="467" textLength="40" lengthAdjust="spacingAndGlyphs">Smussa</text>
<rect x="1031.500" y="477.500" width="81" height="17" rx="3" fill="#8aa5cd" stroke="#2e2e2e"/><rect x="1112.500" y="477.500" width="81" height="17" fill="#696969" stroke="#2e2e2e"/><rect x="1193.500" y="477.500" width="81" height="17" rx="3" fill="#696969" stroke="#2e2e2e"/>
<text x="1050" y="489" style="fill:#141414" textLength="41" lengthAdjust="spacingAndGlyphs">Opzioni</text>
<text x="1124" y="489" style="fill:#d0d0d0" textLength="55" lengthAdjust="spacingAndGlyphs">Strumento</text>
<text x="1197" y="489" style="fill:#d0d0d0" textLength="72" lengthAdjust="spacingAndGlyphs">Settaggi Snap</text>
<rect x="1031" y="500" width="383" height="16" fill="#383838"/>
<text x="1033" y="513" style="font-weight:bold;fill:#c4c4c4" textLength="46" lengthAdjust="spacingAndGlyphs">Opzioni</text>
<text class="d" x="1042" y="534" textLength="88" lengthAdjust="spacingAndGlyphs">Angolo Massimo</text>
<rect class="fd" x="1136.500" y="521.500" width="74" height="18" rx="2"/><text class="d" x="1141" y="534">89 °</text>
<text class="d" x="1042" y="555" textLength="55" lengthAdjust="spacingAndGlyphs">Estrusione</text><text class="d" x="1102" y="555" textLength="27" lengthAdjust="spacing">. . . . .</text>
<rect class="fd" x="1136.500" y="542.500" width="74" height="18" rx="2"/><text class="d" x="1141" y="555">0 cm</text>
<text class="d" x="1222" y="555" textLength="20" lengthAdjust="spacingAndGlyphs">Var.</text><text class="d" x="1247" y="555" textLength="50" lengthAdjust="spacing">. . . . . . . . . .</text>
<rect class="fd" x="1303.500" y="542.500" width="74" height="18" rx="2"/><text class="d" x="1308" y="555">0 %</text>
<text x="1042" y="576" textLength="73" lengthAdjust="spacingAndGlyphs">Offset Interno</text><text x="1121" y="576" textLength="8" lengthAdjust="spacing">. .</text>
<rect class="f" x="1136.500" y="563.500" width="74" height="18" rx="2"/><text x="1141" y="576">0.5 cm</text>
<text x="1222" y="576" textLength="20" lengthAdjust="spacingAndGlyphs">Var.</text><text x="1247" y="576" textLength="50" lengthAdjust="spacing">. . . . . . . . . .</text>
<rect class="f" x="1303.500" y="563.500" width="74" height="18" rx="2"/><text x="1308" y="576">0 %</text>
<text x="1042" y="597" textLength="67" lengthAdjust="spacingAndGlyphs">Suddivisione</text><text x="1115" y="597" textLength="14" lengthAdjust="spacing">. . .</text>
<rect class="f" x="1136.500" y="584.500" width="74" height="18" rx="2"/><text x="1141" y="597">30</text>
<text x="1222" y="597" textLength="75" lengthAdjust="spacingAndGlyphs">Crea N-angoli</text>
<rect x="1303.500" y="586.500" width="11" height="11" rx="3" fill="#5e5e5e" stroke="#2f2f2f"/>
<g fill="#777"><use href="#sp" x="1203" y="526.500"/><use href="#sp" x="1203" y="547.500"/><use href="#sp" x="1370" y="547.500"/></g>
<g fill="#bbb"><use href="#sp" x="1203" y="568.500"/><use href="#sp" x="1370" y="568.500"/><use href="#sp" x="1203" y="589.500"/></g>
<text x="1042" y="617" style="fill:#a8a8a8" textLength="25" lengthAdjust="spacingAndGlyphs">Tipo.</text><text x="1070" y="617" style="fill:#a8a8a8" textLength="55" lengthAdjust="spacing">. . . . . . . . . . .</text>
<rect x="1136.500" y="605.500" width="276" height="15" rx="3" fill="url(#btn)" stroke="#333"/><text x="1143" y="616" style="fill:#d4d4d4" textLength="51" lengthAdjust="spacingAndGlyphs">Convesso</text><path d="M1400 611H1408L1404 614Z" fill="#ddd"/>
<text x="1042" y="636" style="fill:#8a8a8a" textLength="45" lengthAdjust="spacingAndGlyphs">Percorso</text><text x="1092" y="636" style="fill:#8a8a8a" textLength="25" lengthAdjust="spacing">. . . . .</text>
<path d="M1127 626L1133 630L1127 634Z" fill="#1c1c1c"/>
<g stroke="#2f2f2f" fill="none">
<path d="M1174.500 622V783M1199.500 622V783M1224.500 622V783M1249.500 622V783M1274.500 622V783M1299.500 622V783M1324.500 622V783M1349.500 622V783M1374.500 622V783M1399.500 622V783"/>
<path d="M1135 664.500H1414M1135 690.500H1414M1135 715.500H1414M1135 741.500H1414"/>
</g>
<path d="M1135 639.500H1414M1135 767.500H1414" stroke="#1e1e1e" stroke-dasharray="2 1" fill="none"/>
<path d="M1149.500 622V783" stroke="#1a1a1a" fill="none"/>
<text x="1149" y="669" style="fill:#888">0.8</text><text x="1149" y="720" style="fill:#888">0.4</text>
<text x="1141" y="778" style="fill:#888">0.0</text><text x="1191" y="778" style="fill:#888">0.2</text><text x="1241" y="778" style="fill:#888">0.4</text><text x="1291" y="778" style="fill:#888">0.6</text><text x="1341" y="778" style="fill:#888">0.8</text><text x="1392" y="778" style="fill:#888">1.0</text>
<path d="M1149.500 767C1176 745 1204 725 1232 703S1285 670 1316 656S1375 640 1400 639" fill="none" stroke="#1c2026" stroke-width="1"/>
<g fill="#1c2026"><circle cx="1149.500" cy="767" r="2.600"/><circle cx="1232.500" cy="703" r="2.600"/><circle cx="1316" cy="656" r="2.600"/><circle cx="1400.500" cy="639.500" r="2.600"/></g>
<text x="1042" y="797" style="fill:#8a8a8a" textLength="84" lengthAdjust="spacingAndGlyphs">Preserva Gruppi</text>
<rect x="1136.500" y="787.500" width="11" height="11" rx="3" fill="#505050" stroke="#3c3c3c"/><path d="M1138 793L1141 797L1147 788" fill="none" stroke="#9a9a9a" stroke-width="1.500"/>
<path d="M1429 806L1438 797M1433 806L1438 801" stroke="#8a8a8a"/>
</svg>
</body></html>
